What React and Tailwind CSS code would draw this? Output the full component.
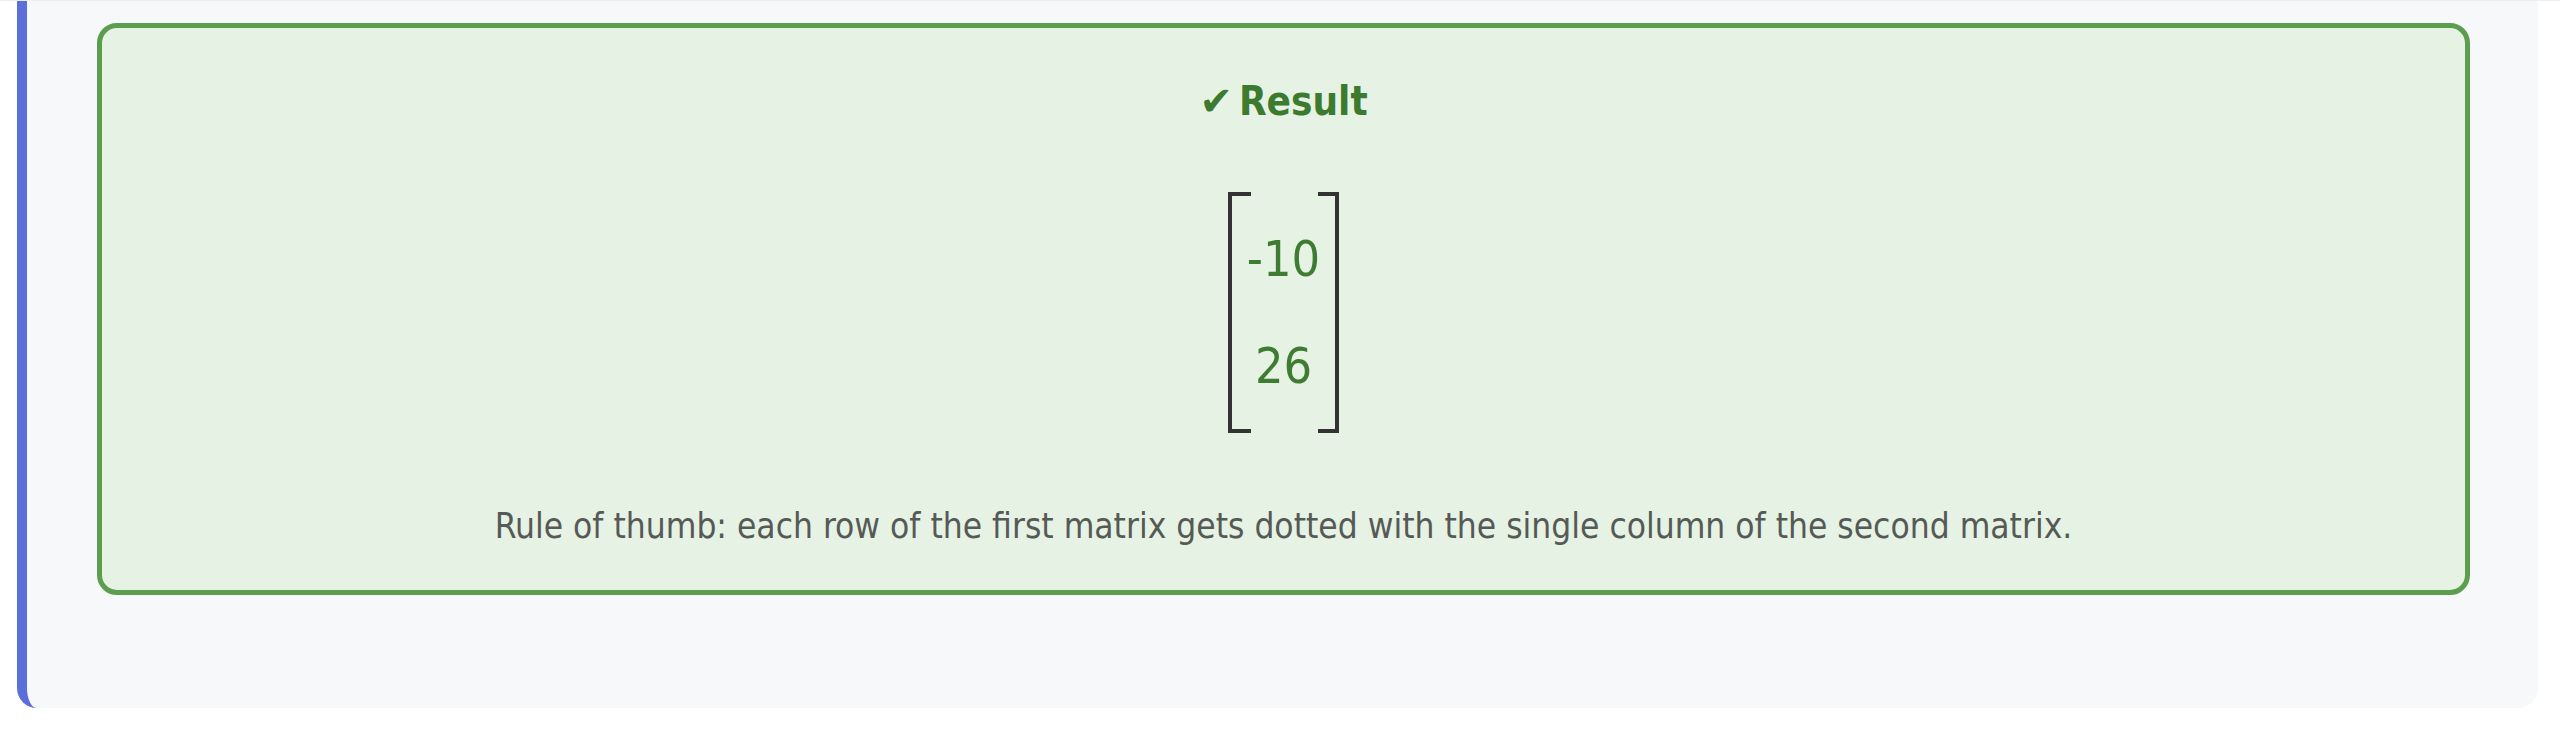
export default function App() {
  const rows = ['-10', '26'];

  return (
    <div className="min-h-[735px] overflow-hidden border-t border-[#eceef1] bg-white font-['DejaVu_Sans_Condensed','DejaVu_Sans',sans-serif]">
      <div className="-mt-[21px] ml-[17px] mr-[22px] rounded-[20px] border-l-[10px] border-[#5b6fdb] bg-[#f7f8fa] pt-[43px] pb-[113px] pl-[70px] pr-[68px]">
        <div className="rounded-[20px] border-[5px] border-[#5b9f4e] bg-[#e6f2e4] pt-[50px] pb-[44px] text-center">
          <h3 className="text-[40px] font-bold leading-[46px] text-[#3b7a2f]">
            <span className="mr-[6px] font-['DejaVu_Sans',sans-serif] text-[40px]">✔</span>Result
          </h3>

          <div className="mt-[68px] flex justify-center">
            <div className="relative flex w-[111px] flex-col gap-[47px] border-x-4 border-[#333] py-[37px]">
              <span className="absolute top-0 -left-1 h-1 w-[23px] bg-[#333]" />
              <span className="absolute bottom-0 -left-1 h-1 w-[23px] bg-[#333]" />
              <span className="absolute top-0 -right-1 h-1 w-[21px] bg-[#333]" />
              <span className="absolute bottom-0 -right-1 h-1 w-[21px] bg-[#333]" />
              {rows.map((value) => (
                <div key={value} className="text-[50px] leading-[60px] text-[#3e7d31]">{value}</div>
              ))}
            </div>
          </div>

          <p className="mt-[73px] text-[35px] leading-[40px] text-[#565a56]">
            Rule of thumb: each row of the first matrix gets dotted with the single column of the second matrix.
          </p>
        </div>
      </div>
    </div>
  );
}
